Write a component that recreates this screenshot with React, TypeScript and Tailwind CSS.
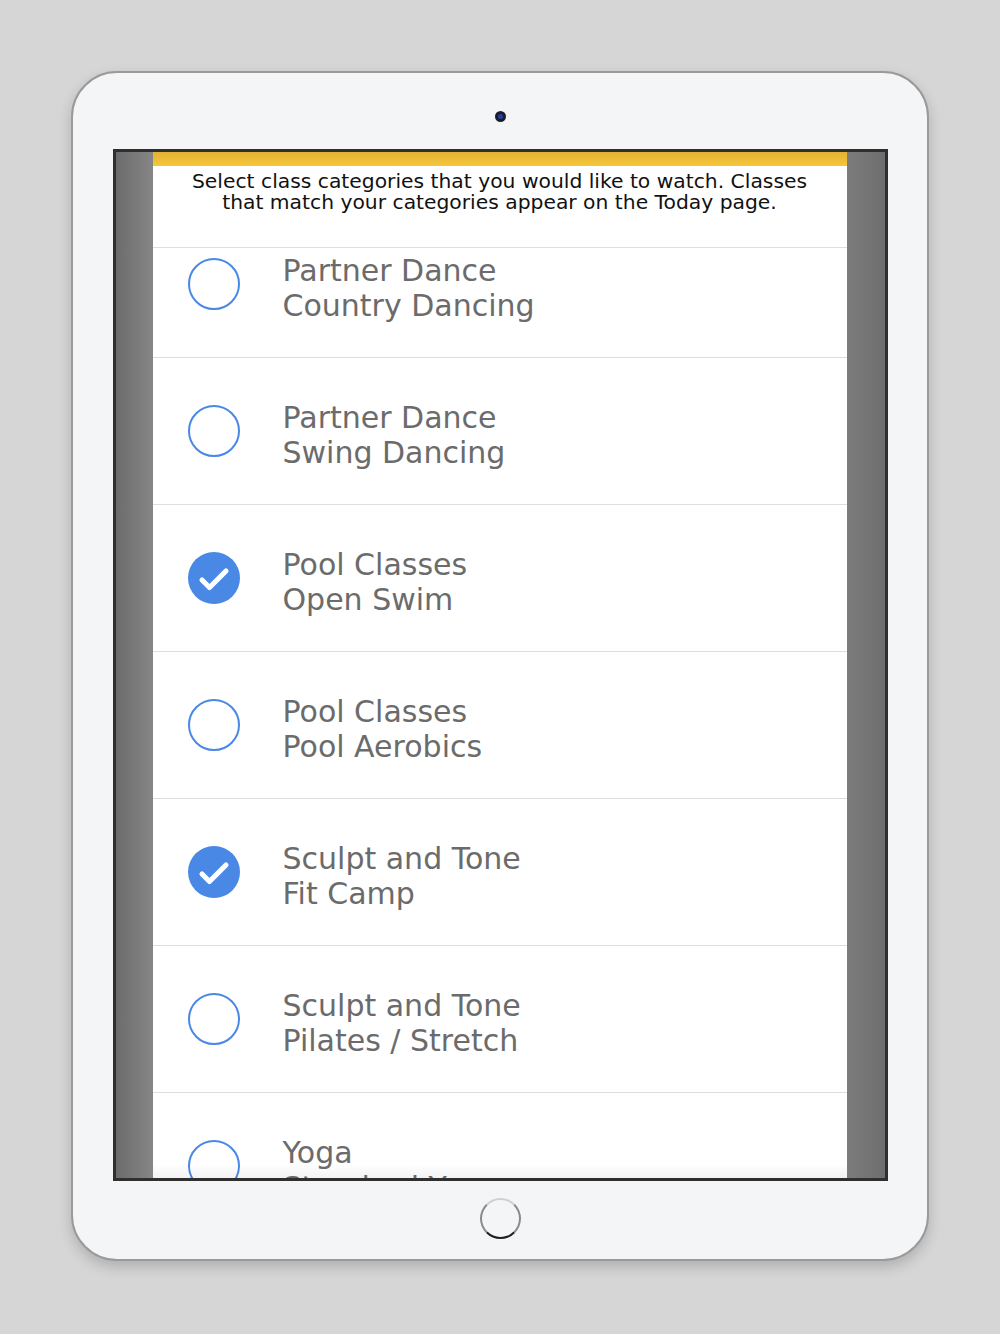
import { Check } from 'lucide-react'

const rows = [
  { top: 'Partner Dance', sub: 'Country Dancing', on: false },
  { top: 'Partner Dance', sub: 'Swing Dancing', on: false },
  { top: 'Pool Classes', sub: 'Open Swim', on: true },
  { top: 'Pool Classes', sub: 'Pool Aerobics', on: false },
  { top: 'Sculpt and Tone', sub: 'Fit Camp', on: true },
  { top: 'Sculpt and Tone', sub: 'Pilates / Stretch', on: false },
  { top: 'Yoga', sub: 'Standard Yoga', on: false },
]

function Radio({ on }: { on: boolean }) {
  if (on) {
    return (
      <div className="w-[52px] h-[52px] rounded-full bg-[#4a88e6] flex items-center justify-center shrink-0">
        <Check size={36} strokeWidth={3.4} className="text-white mt-[3px]" />
      </div>
    )
  }
  return <div className="w-[52px] h-[52px] rounded-full border-2 border-[#4a88e6] shrink-0" />
}

export default function App() {
  return (
    <div className="w-[1000px] h-[1334px] bg-[#d6d6d6] flex justify-center pt-[71px] font-['DejaVu_Sans',sans-serif]">
      {/* device frame */}
      <div className="w-[858px] h-[1190px] rounded-[46px] bg-[#f4f5f7] border-2 border-[#9a9a9a] shadow-[0_6px_14px_rgba(0,0,0,0.18)] flex flex-col items-center">
        <div className="mt-[38px] w-[11px] h-[11px] rounded-full bg-[#1a1d2e] flex items-center justify-center">
          <div className="w-[5px] h-[5px] rounded-full bg-[#2a3f9a]" />
        </div>

        {/* screen */}
        <div className="mt-[27px] w-[775px] h-[1032px] border-[3px] border-[#2f2f2f] flex overflow-hidden">
          <div className="w-[37px] bg-gradient-to-r from-[#6c6c6c] to-[#868686]" />

          <div className="w-[694px] bg-white flex flex-col relative">
            <div className="h-[14px] bg-gradient-to-b from-[#e3b232] to-[#f5c73b]" />
            <div className="h-[82px] border-b border-[#dedede] pt-[5px] text-center text-[20.3px] leading-[21px] text-[#111]">
              <p>Select class categories that you would like to watch. Classes</p>
              <p>that match your categories appear on the Today page.</p>
            </div>

            <div className="flex-1 overflow-hidden">
              <div className="-mt-[37px]">
                {rows.map((r, i) => (
                  <div key={i} className="h-[147px] border-b border-[#dedede] flex items-center pl-[35px] gap-[43px]">
                    <Radio on={r.on} />
                    <div className="text-[30px] leading-[35px] text-[#6b6b6b] pt-[8px]">
                      <div>{r.top}</div>
                      <div>{r.sub}</div>
                    </div>
                  </div>
                ))}
              </div>
            </div>
            <div className="absolute bottom-0 left-0 right-0 h-[14px] bg-gradient-to-b from-transparent to-black/5" />
          </div>

          <div className="flex-1 bg-gradient-to-r from-[#7c7c7c] to-[#6e6e6e]" />
        </div>

        {/* home button */}
        <div className="mt-[17px] w-[41px] h-[41px] rounded-full border-2 border-t-[#d0d0d0] border-x-[#8a8a8a] border-b-[#1e1e1e]" />
      </div>
    </div>
  )
}
